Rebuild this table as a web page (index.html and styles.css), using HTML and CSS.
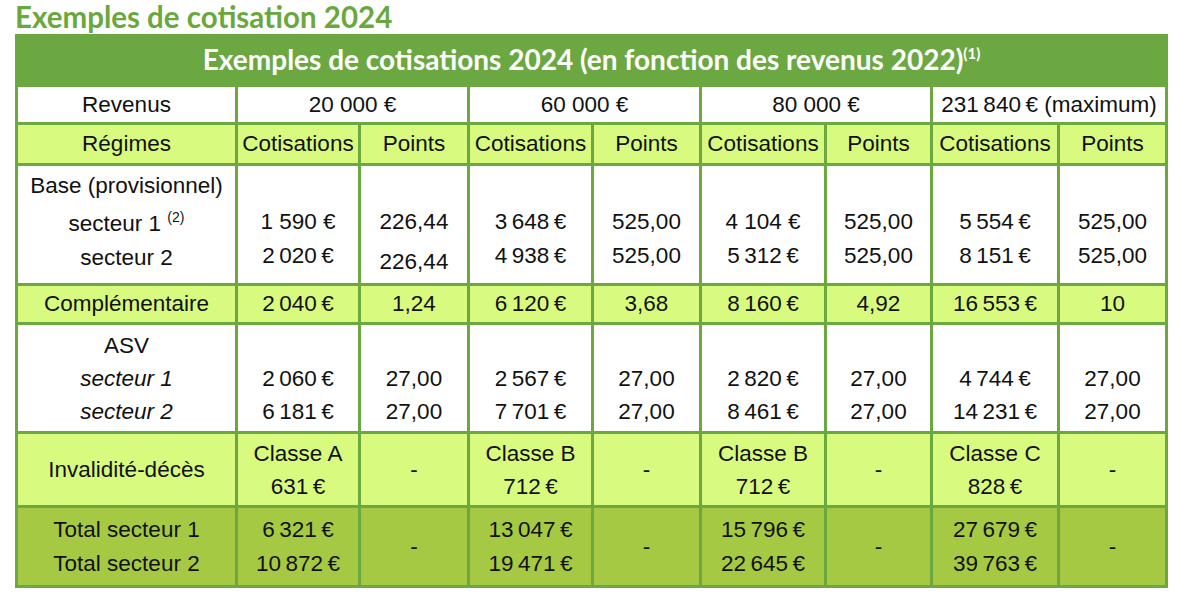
FILE: index.html
```html
<!DOCTYPE html>
<html lang="fr">
<head>
<meta charset="utf-8">
<title>Exemples de cotisation 2024</title>
<link rel="stylesheet" href="styles.css">
</head>
<body>
<h1 class="page-title">Exemples de cotisation 2024</h1>
<table class="grid">
  <colgroup>
    <col class="c-label"><col class="c-a"><col class="c-b"><col class="c-c"><col class="c-d"><col class="c-e"><col class="c-f"><col class="c-g"><col class="c-h">
  </colgroup>
  <tr class="r-title">
    <th colspan="9">Exemples de cotisations 2024 (en fonction des revenus 2022)<sup class="sup-t">(1)</sup></th>
  </tr>
  <tr class="r-rev">
    <td>Revenus</td>
    <td colspan="2">20 000 €</td>
    <td colspan="2">60 000 €</td>
    <td colspan="2">80 000 €</td>
    <td colspan="2">231&#8201;840&#8201;€ (maximum)</td>
  </tr>
  <tr class="r-light r-reg">
    <td>Régimes</td>
    <td>Cotisations</td><td>Points</td>
    <td>Cotisations</td><td>Points</td>
    <td>Cotisations</td><td>Points</td>
    <td>Cotisations</td><td>Points</td>
  </tr>
  <tr class="r-base">
    <td><div class="ln">Base (provisionnel)</div><div class="ln ln-gap">secteur 1 <sup class="sup-c">(2)</sup></div><div class="ln">secteur 2</div></td>
    <td class="v"><div class="ln">1 590 €</div><div class="ln">2&#8201;020&#8201;€</div></td>
    <td class="v"><div class="ln">226,44</div><div class="ln ln-low">226,44</div></td>
    <td class="v"><div class="ln">3&#8201;648&#8201;€</div><div class="ln">4&#8201;938&#8201;€</div></td>
    <td class="v"><div class="ln">525,00</div><div class="ln">525,00</div></td>
    <td class="v"><div class="ln">4 104 €</div><div class="ln">5&#8201;312&#8201;€</div></td>
    <td class="v"><div class="ln">525,00</div><div class="ln">525,00</div></td>
    <td class="v"><div class="ln">5&#8201;554&#8201;€</div><div class="ln">8&#8201;151&#8201;€</div></td>
    <td class="v"><div class="ln">525,00</div><div class="ln">525,00</div></td>
  </tr>
  <tr class="r-light r-comp">
    <td>Complémentaire</td>
    <td>2&#8201;040&#8201;€</td><td>1,24</td>
    <td>6&#8201;120&#8201;€</td><td>3,68</td>
    <td>8&#8201;160&#8201;€</td><td>4,92</td>
    <td>16&#8201;553&#8201;€</td><td>10</td>
  </tr>
  <tr class="r-asv">
    <td><div class="ln">ASV</div><div class="ln it">secteur 1</div><div class="ln it">secteur 2</div></td>
    <td class="v"><div class="ln">2&#8201;060&#8201;€</div><div class="ln">6&#8201;181&#8201;€</div></td>
    <td class="v"><div class="ln">27,00</div><div class="ln">27,00</div></td>
    <td class="v"><div class="ln">2&#8201;567&#8201;€</div><div class="ln">7&#8201;701&#8201;€</div></td>
    <td class="v"><div class="ln">27,00</div><div class="ln">27,00</div></td>
    <td class="v"><div class="ln">2&#8201;820&#8201;€</div><div class="ln">8&#8201;461&#8201;€</div></td>
    <td class="v"><div class="ln">27,00</div><div class="ln">27,00</div></td>
    <td class="v"><div class="ln">4&#8201;744&#8201;€</div><div class="ln">14&#8201;231&#8201;€</div></td>
    <td class="v"><div class="ln">27,00</div><div class="ln">27,00</div></td>
  </tr>
  <tr class="r-light r-inv">
    <td>Invalidité-décès</td>
    <td><div class="ln">Classe A</div><div class="ln">631&#8201;€</div></td><td>-</td>
    <td><div class="ln">Classe B</div><div class="ln">712&#8201;€</div></td><td>-</td>
    <td><div class="ln">Classe B</div><div class="ln">712&#8201;€</div></td><td>-</td>
    <td><div class="ln">Classe C</div><div class="ln">828&#8201;€</div></td><td>-</td>
  </tr>
  <tr class="r-total">
    <td><div class="ln">Total secteur 1</div><div class="ln">Total secteur 2</div></td>
    <td><div class="ln">6&#8201;321&#8201;€</div><div class="ln">10&#8201;872&#8201;€</div></td><td>-</td>
    <td><div class="ln">13&#8201;047&#8201;€</div><div class="ln">19&#8201;471&#8201;€</div></td><td>-</td>
    <td><div class="ln">15&#8201;796&#8201;€</div><div class="ln">22&#8201;645&#8201;€</div></td><td>-</td>
    <td><div class="ln">27&#8201;679&#8201;€</div><div class="ln">39&#8201;763&#8201;€</div></td><td>-</td>
  </tr>
</table>
</body>
</html>
```

FILE: styles.css
```css
html, body {
  margin: 0;
  padding: 0;
  background: #ffffff;
}

body {
  font-family: "Liberation Sans", Arial, sans-serif;
  color: #111111;
}

.page-title {
  margin: 0;
  padding: 2px 0 0 15px;
  height: 32px;
  font-family: Lato, "Open Sans", sans-serif;
  font-weight: 700;
  font-size: 29.5px;
  line-height: 30px;
  color: #6aa83e;
}

.grid {
  margin-left: 15px;
  width: 1150px;
  table-layout: fixed;
  border-collapse: collapse;
  font-size: 22.5px;
  text-align: center;
}

.c-label { width: 220px; }
.c-a { width: 123px; }
.c-b { width: 109px; }
.c-c { width: 124px; }
.c-d { width: 108px; }
.c-e { width: 125px; }
.c-f { width: 106px; }
.c-g { width: 127px; }
.c-h { width: 108px; }

.grid th,
.grid td {
  border: 3px solid #6ba83f;
  padding: 0;
  white-space: nowrap;
  vertical-align: middle;
}

.r-title { height: 50px; }
.r-rev { height: 38px; }
.r-reg { height: 41px; }
.r-base { height: 120px; }
.r-comp { height: 39px; }
.r-asv { height: 109px; }
.r-inv { height: 74px; }
.r-total { height: 80px; }

.r-title th {
  background: #6ba842;
  color: #ffffff;
  font-family: Lato, "Open Sans", sans-serif;
  font-weight: 700;
  font-size: 28px;
  padding-bottom: 3px;
}

.sup-t {
  font-size: 15px;
  vertical-align: 11px;
  line-height: 0;
}

.sup-c {
  font-size: 14px;
  vertical-align: 9px;
  line-height: 0;
}

.r-rev td {
  background: #ffffff;
}

.r-light td {
  background: #d8fb7f;
}

.ln {
  line-height: 34px;
  height: 34px;
}

.r-base td {
  background: #ffffff;
  vertical-align: top;
  padding-top: 3px;
}

.r-base .ln-gap { margin-top: 4px; }

.r-base td.v { padding-top: 39px; }

.r-base .ln-low { margin-top: 6px; }

.r-asv td {
  background: #ffffff;
  vertical-align: top;
  padding-top: 4px;
}

.r-asv .ln {
  line-height: 33px;
  height: 33px;
}

.r-asv td.v { padding-top: 37px; }

.it { font-style: italic; }

.r-inv .ln {
  line-height: 33px;
  height: 33px;
}

.r-total td {
  background: #a6c943;
}
```
